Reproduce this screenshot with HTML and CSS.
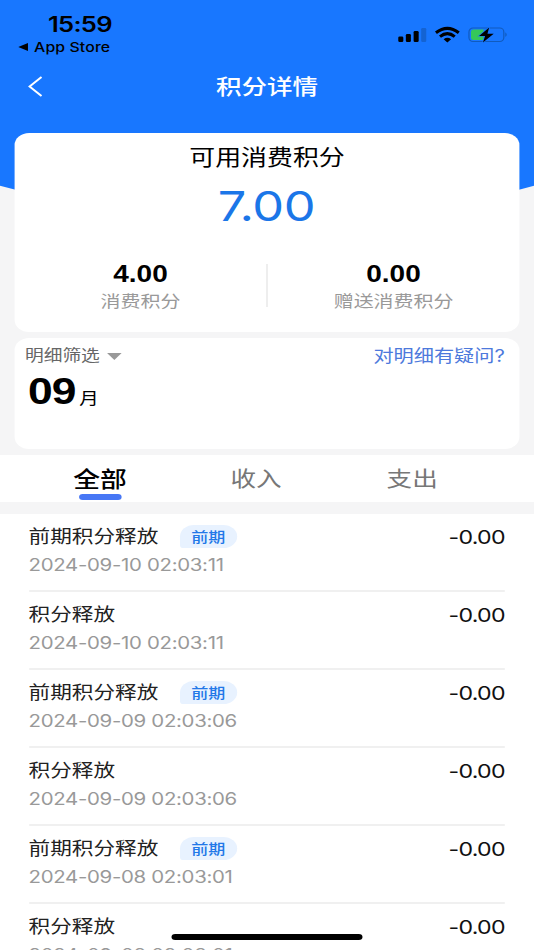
FILE: index.html
```html
<!DOCTYPE html>
<html lang="zh-CN">
<head>
<meta charset="utf-8">
<title>积分详情</title>
<link rel="stylesheet" href="styles.css">
</head>
<body>
<div class="screen">
  <svg class="backdrop" viewBox="0 0 534 230" preserveAspectRatio="none"><path d="M0 0H534V185.700Q267 259 0 185.700Z" fill="#1877ff"/></svg>
  <header class="status">
    <div class="status-left">
      <div class="clock">15:59</div>
      <div class="return"><svg class="return-arrow" viewBox="0 0 10 8" preserveAspectRatio="none"><path d="M0 4L10 0V8Z"/></svg><span>App Store</span></div>
    </div>
    <svg class="status-icons" viewBox="0 0 112 20" preserveAspectRatio="none">
      <rect x="0.500" y="10.500" width="5" height="5.500" rx="1.300"/>
      <rect x="8" y="8" width="5" height="8" rx="1.300"/>
      <rect x="15.700" y="5" width="5" height="11" rx="1.300"/>
      <rect x="23.200" y="2" width="5" height="14" rx="1.300" fill="#1463d2"/>
      <g transform="translate(-1.200 0)">
        <g fill="none" stroke="#000" stroke-width="3">
          <path d="M39 6.800Q50.300-2 61.600 6.800"/>
          <path d="M43 10.600Q50.300 4.600 57.600 10.600"/>
        </g>
        <path d="M46.600 13.200Q50.300 10.500 54 13.200L50.300 16.400Z"/>
      </g>
      <g transform="translate(-1 0)">
        <rect x="71.500" y="2" width="34.500" height="13.500" rx="4" fill="none" stroke="#115bbd" stroke-width="1.200"/>
        <path d="M107.500 6.300Q110.300 8.700 107.500 11.100Z" fill="#115bbd"/>
        <path d="M76 3.500H86V14H76Q73.500 14 73.500 11.500V6Q73.500 3.500 76 3.500Z" fill="#35c759"/>
        <path d="M91.500 1.500L81.500 10H87.500L85.300 16.500L96 7.800H89.800Z" stroke="#1877ff" stroke-width="1.200" paint-order="stroke"/>
      </g>
    </svg>
  </header>
  <nav class="nav">
    <svg class="back" viewBox="0 0 14 22" preserveAspectRatio="none"><path d="M13 1L1.500 11L13 21" fill="none" stroke="#fff" stroke-width="1.900"/></svg>
    <h1>积分详情</h1>
  </nav>
  <main>
    <section class="card balance">
      <div class="balance-label">可用消费积分</div>
      <div class="balance-total">7.00</div>
      <div class="parts">
        <div class="part"><b>4.00</b><span>消费积分</span></div>
        <i class="part-line"></i>
        <div class="part"><b>0.00</b><span>赠送消费积分</span></div>
      </div>
    </section>
    <section class="card filter">
      <div class="filter-top">
        <span class="filter-name">明细筛选<i class="caret"></i></span>
        <a class="question">对明细有疑问?</a>
      </div>
      <div class="month"><b>09</b><span>月</span></div>
    </section>
    <div class="tabs"><span class="tab active">全部</span><span class="tab">收入</span><span class="tab">支出</span></div>
    <ul class="records">
      <li><div class="name">前期积分释放<em>前期</em></div><div class="amount">-0.00</div><time>2024-09-10 02:03:11</time></li>
      <li><div class="name">积分释放</div><div class="amount">-0.00</div><time>2024-09-10 02:03:11</time></li>
      <li><div class="name">前期积分释放<em>前期</em></div><div class="amount">-0.00</div><time>2024-09-09 02:03:06</time></li>
      <li><div class="name">积分释放</div><div class="amount">-0.00</div><time>2024-09-09 02:03:06</time></li>
      <li><div class="name">前期积分释放<em>前期</em></div><div class="amount">-0.00</div><time>2024-09-08 02:03:01</time></li>
      <li><div class="name">积分释放</div><div class="amount">-0.00</div><time>2024-09-08 02:03:01</time></li>
    </ul>
  </main>
  <div class="home-bar"></div>
</div>
</body>
</html>
```
FILE: styles.css
```css
* { box-sizing: border-box; margin: 0; padding: 0; }
html, body { width: 534px; height: 950px; overflow: hidden; background: #f5f5f6; }
.screen {
  position: relative;
  width: 439px;
  height: 950px;
  overflow: hidden;
  transform: scaleX(1.2164);
  transform-origin: 0 0;
  background: #f5f5f6;
  font-family: Inter, "Noto Sans CJK SC", sans-serif;
  color: #000;
}
.backdrop { position: absolute; left: 0; top: 0; width: 439px; height: 230px; }
.status { position: relative; height: 60px; display: flex; justify-content: space-between; padding: 12px 19.5px 0 15px; }
.clock { margin-left: 24.5px; font-size: 21px; line-height: 25px; font-weight: 600; letter-spacing: -0.6px; }
.return { display: flex; align-items: center; font-size: 13px; line-height: 20px; font-weight: 500; gap: 5px; letter-spacing: 0.1px; }
.return-arrow { width: 8px; height: 8px; }
.status-icons { width: 93px; height: 20px; margin-top: 14px; }
.nav { position: relative; height: 73px; display: flex; justify-content: center; }
.nav h1 { font-size: 21px; line-height: 30px; font-weight: 500; color: #fff; margin-top: 12px; }
.back { position: absolute; left: 23px; top: 16px; width: 12px; height: 21px; }
main { position: relative; }
.card { margin: 0 12px; background: #fff; border-radius: 12px; }
.balance { height: 199px; text-align: center; padding-top: 8px; }
.balance-label { font-size: 21.3px; line-height: 32px; }
.balance-total { font-size: 41.5px; line-height: 50px; margin-top: 8px; color: #1b76e8; letter-spacing: -0.4px; margin-left: -1px; }
.parts { display: flex; margin-top: 29px; align-items: flex-start; }
.part { flex: 1; display: flex; flex-direction: column; }
.part b { font: bold 23px/28px "Liberation Sans", sans-serif; }
.part span { font-size: 16.4px; line-height: 26px; color: #999; }
.part-line { width: 1px; height: 43px; background: #e4e4e4; margin-top: 4px; }
.filter { height: 111px; margin-top: 6px; padding: 5px 12px 0 8.5px; }
.filter-top { display: flex; justify-content: space-between; line-height: 26px; }
.filter-name { display: flex; align-items: center; font-size: 15.4px; color: #666; }
.caret { margin-left: 6px; border: 6px solid transparent; border-top: 7px solid #999; border-bottom: 0; }
.question { font-size: 16.6px; color: #4d79dc; }
.month { display: flex; align-items: baseline; margin-left: 2.5px; }
.month b { font: bold 36.5px/45px "Liberation Sans", sans-serif; letter-spacing: -0.8px; }
.month span { font-size: 16px; margin-left: 3.2px; }
.tabs { height: 47px; margin-top: 6px; padding: 0 36px 0 18px; display: flex; background: #fff; }
.tab { flex: 1; position: relative; text-align: center; font-size: 21px; line-height: 48px; color: #777; }
.tab.active { color: #000; font-size: 22px; font-weight: 500; }
.tab.active::after { content: ""; position: absolute; left: 50%; bottom: 2px; width: 35px; height: 6px; margin-left: -17.5px; border-radius: 3px; background: #4777f5; }
.records { list-style: none; margin-top: 12px; padding: 0 24px 0 23.5px; background: #fff; height: 440px; overflow: hidden; }
.records li { height: 78px; display: grid; grid-template-columns: 1fr auto; align-content: start; padding-top: 8px; border-bottom: 2px solid #f0f0f0; }
.name { display: flex; align-items: center; padding-bottom: 2px; font-size: 17.8px; line-height: 28px; color: #222; }
.name em { margin: -2px 0 0 17.5px; width: 47px; height: 23px; border-radius: 12px 12px 12px 3px; background: #e8f2ff; color: #2278e8; font: 500 14px/23px "Noto Sans CJK SC", sans-serif; text-align: center; }
.amount { font-size: 19px; line-height: 32px; color: #111; letter-spacing: -0.6px; }
.records time { grid-column: 1 / 3; margin-top: -1px; font-size: 16.8px; line-height: 24px; color: #999; letter-spacing: -0.26px; }
.home-bar { position: absolute; left: 141px; top: 934px; width: 157px; height: 6px; border-radius: 3px; background: #000; }
```
